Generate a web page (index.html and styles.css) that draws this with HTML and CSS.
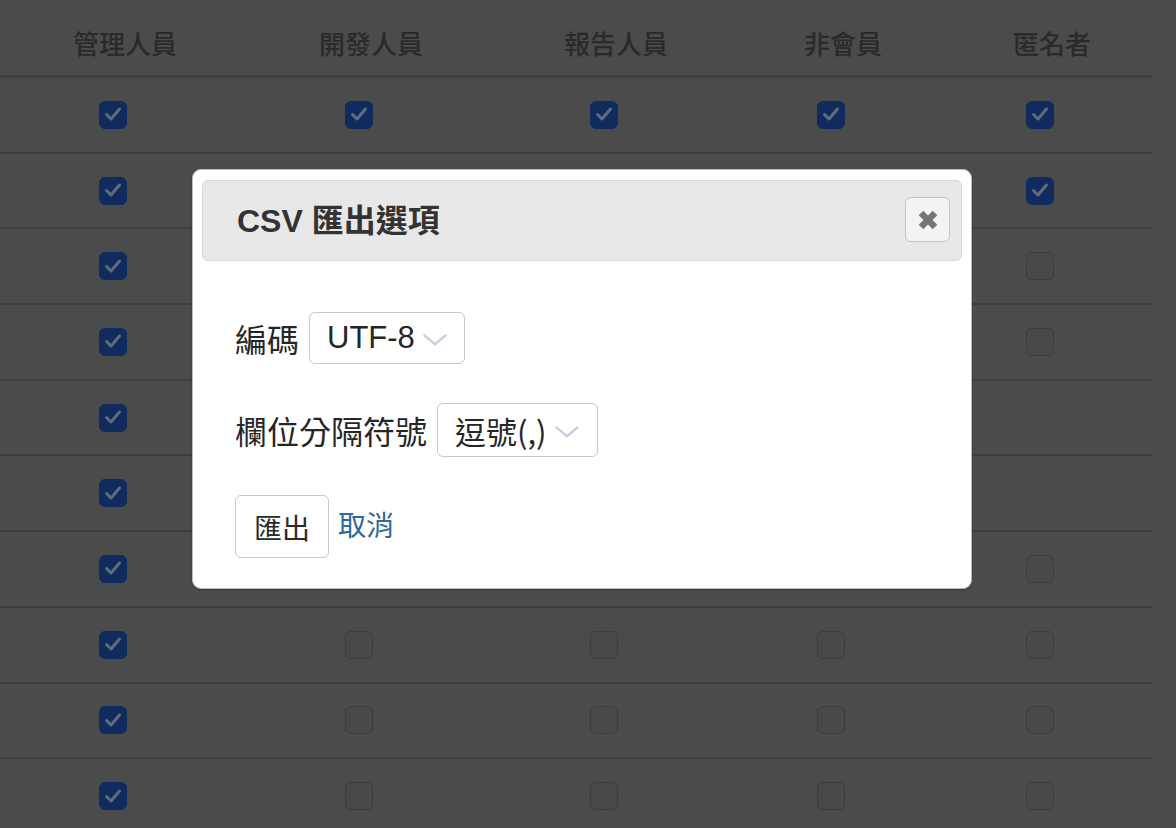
FILE: index.html
```html
<!DOCTYPE html>
<html lang="zh-Hant">
<head>
<meta charset="utf-8">
<title>CSV 匯出選項</title>
<link rel="stylesheet" href="styles.css">
</head>
<body>
<div class="table">
  <div class="row head">
    <div class="th">管理人員</div>
    <div class="th">開發人員</div>
    <div class="th">報告人員</div>
    <div class="th">非會員</div>
    <div class="th">匿名者</div>
  </div>
  <div class="row">
    <div class="td"><span class="cb on"><svg viewBox="0 0 28 28"><path d="M7.5 14.5 L12 19 L20.5 9"/></svg></span></div>
    <div class="td"><span class="cb on"><svg viewBox="0 0 28 28"><path d="M7.5 14.5 L12 19 L20.5 9"/></svg></span></div>
    <div class="td"><span class="cb on"><svg viewBox="0 0 28 28"><path d="M7.5 14.5 L12 19 L20.5 9"/></svg></span></div>
    <div class="td"><span class="cb on"><svg viewBox="0 0 28 28"><path d="M7.5 14.5 L12 19 L20.5 9"/></svg></span></div>
    <div class="td"><span class="cb on"><svg viewBox="0 0 28 28"><path d="M7.5 14.5 L12 19 L20.5 9"/></svg></span></div>
  </div>
  <div class="row">
    <div class="td"><span class="cb on"><svg viewBox="0 0 28 28"><path d="M7.5 14.5 L12 19 L20.5 9"/></svg></span></div>
    <div class="td"><span class="cb"></span></div>
    <div class="td"><span class="cb"></span></div>
    <div class="td"><span class="cb"></span></div>
    <div class="td"><span class="cb on"><svg viewBox="0 0 28 28"><path d="M7.5 14.5 L12 19 L20.5 9"/></svg></span></div>
  </div>
  <div class="row">
    <div class="td"><span class="cb on"><svg viewBox="0 0 28 28"><path d="M7.5 14.5 L12 19 L20.5 9"/></svg></span></div>
    <div class="td"><span class="cb"></span></div>
    <div class="td"><span class="cb"></span></div>
    <div class="td"><span class="cb"></span></div>
    <div class="td"><span class="cb"></span></div>
  </div>
  <div class="row">
    <div class="td"><span class="cb on"><svg viewBox="0 0 28 28"><path d="M7.5 14.5 L12 19 L20.5 9"/></svg></span></div>
    <div class="td"><span class="cb"></span></div>
    <div class="td"><span class="cb"></span></div>
    <div class="td"><span class="cb"></span></div>
    <div class="td"><span class="cb"></span></div>
  </div>
  <div class="row">
    <div class="td"><span class="cb on"><svg viewBox="0 0 28 28"><path d="M7.5 14.5 L12 19 L20.5 9"/></svg></span></div>
    <div class="td"><span class="cb"></span></div>
    <div class="td"><span class="cb"></span></div>
    <div class="td"><span class="cb"></span></div>
    <div class="td"></div>
  </div>
  <div class="row">
    <div class="td"><span class="cb on"><svg viewBox="0 0 28 28"><path d="M7.5 14.5 L12 19 L20.5 9"/></svg></span></div>
    <div class="td"><span class="cb"></span></div>
    <div class="td"><span class="cb"></span></div>
    <div class="td"><span class="cb"></span></div>
    <div class="td"></div>
  </div>
  <div class="row">
    <div class="td"><span class="cb on"><svg viewBox="0 0 28 28"><path d="M7.5 14.5 L12 19 L20.5 9"/></svg></span></div>
    <div class="td"><span class="cb"></span></div>
    <div class="td"><span class="cb"></span></div>
    <div class="td"><span class="cb"></span></div>
    <div class="td"><span class="cb"></span></div>
  </div>
  <div class="row">
    <div class="td"><span class="cb on"><svg viewBox="0 0 28 28"><path d="M7.5 14.5 L12 19 L20.5 9"/></svg></span></div>
    <div class="td"><span class="cb"></span></div>
    <div class="td"><span class="cb"></span></div>
    <div class="td"><span class="cb"></span></div>
    <div class="td"><span class="cb"></span></div>
  </div>
  <div class="row">
    <div class="td"><span class="cb on"><svg viewBox="0 0 28 28"><path d="M7.5 14.5 L12 19 L20.5 9"/></svg></span></div>
    <div class="td"><span class="cb"></span></div>
    <div class="td"><span class="cb"></span></div>
    <div class="td"><span class="cb"></span></div>
    <div class="td"><span class="cb"></span></div>
  </div>
  <div class="row">
    <div class="td"><span class="cb on"><svg viewBox="0 0 28 28"><path d="M7.5 14.5 L12 19 L20.5 9"/></svg></span></div>
    <div class="td"><span class="cb"></span></div>
    <div class="td"><span class="cb"></span></div>
    <div class="td"><span class="cb"></span></div>
    <div class="td"><span class="cb"></span></div>
  </div>
</div>

<div class="modal">
  <div class="modal-head">
    <h2 class="modal-title">CSV 匯出選項</h2>
    <button class="close" type="button" aria-label="關閉">
      <svg viewBox="0 0 24 24"><path d="M5 5 L19 19 M19 5 L5 19"/></svg>
    </button>
  </div>
  <div class="modal-body">
    <div class="field">
      <span class="label">編碼</span>
      <span class="select">UTF-8<svg class="chev" viewBox="0 0 28 16"><path d="M2 3 L14 13 L26 3"/></svg></span>
    </div>
    <div class="field">
      <span class="label">欄位分隔符號</span>
      <span class="select tall"><span class="cjk">逗號(,)</span><svg class="chev" viewBox="0 0 28 16"><path d="M2 3 L14 13 L26 3"/></svg></span>
    </div>
    <div class="actions">
      <button class="btn" type="button">匯出</button>
      <a class="link" href="#">取消</a>
    </div>
  </div>
</div>
</body>
</html>
```

FILE: styles.css
```css
html, body {
  margin: 0;
  padding: 0;
}
body {
  width: 1176px;
  height: 828px;
  overflow: hidden;
  background: #4b4b4b;
  font-family: "Noto Sans CJK TC", sans-serif;
  position: relative;
}

.table {
  width: 1153px;
}
.row {
  display: grid;
  grid-template-columns: 226px 266px 224px 230px 188px;
  height: 73.7px;
  border-bottom: 2px solid #3e3e3e;
  box-sizing: content-box;
}
.row.head {
  height: 75px;
  border-bottom: 3px solid #404040;
}
.th {
  padding-left: 24px;
  padding-top: 24px;
  text-align: center;
  font-size: 26px;
  font-weight: 500;
  line-height: 38px;
  color: #2a2a2a;
}
.td {
  display: flex;
  align-items: center;
  justify-content: center;
}
.cb {
  width: 28px;
  height: 28px;
  box-sizing: border-box;
  border-radius: 6px;
  border: 1.5px solid #3c3c3c;
  background: #494949;
  display: block;
}
.cb.on {
  background: #102b5e;
  border-color: #102b5e;
}
.cb svg {
  display: block;
  margin: -1.5px;
  width: 28px;
  height: 28px;
}
.cb svg path {
  fill: none;
  stroke: #626a7c;
  stroke-width: 3;
  stroke-linecap: round;
  stroke-linejoin: round;
}

.modal {
  position: absolute;
  left: 192px;
  top: 169px;
  width: 780px;
  box-sizing: border-box;
  background: #fff;
  border: 1px solid #bcbcbc;
  border-radius: 9px;
  box-shadow: 0 1px 2px rgba(0, 0, 0, 0.25);
  padding: 10px 9px 30px;
}
.modal-head {
  height: 81px;
  box-sizing: border-box;
  background: #e8e8e8;
  border: 1px solid #d8d8d8;
  border-radius: 6px;
  display: flex;
  align-items: center;
  justify-content: space-between;
  padding: 0 11px 0 34px;
}
.modal-title {
  margin: 0;
  font-family: "Liberation Sans", "Noto Sans CJK TC", sans-serif;
  font-weight: bold;
  font-size: 32px;
  color: #333;
  line-height: 40px;
}
.close {
  width: 45px;
  height: 45px;
  box-sizing: border-box;
  border: 1.5px solid #c4c4c4;
  border-radius: 6px;
  background: #f3f3f3;
  padding: 0;
  display: flex;
  align-items: center;
  justify-content: center;
  margin-top: -2px;
}
.close svg {
  width: 24px;
  height: 24px;
}
.close svg path {
  stroke: #767676;
  stroke-width: 6.5;
  fill: none;
}

.modal-body {
  padding: 51px 0 0 33px;
  display: flex;
  flex-direction: column;
  gap: 39px;
}
.field {
  display: flex;
  align-items: center;
  gap: 10px;
}
.label {
  font-size: 32px;
  color: #262626;
  line-height: 40px;
}
.select {
  height: 52px;
  box-sizing: border-box;
  border: 1.5px solid #c9c9c9;
  border-radius: 6px;
  display: inline-flex;
  align-items: center;
  padding: 0 15px 0 17px;
  font-family: "Liberation Sans", "Noto Sans CJK TC", sans-serif;
  font-size: 31px;
  color: #262626;
}
.select.tall {
  height: 54px;
  padding-right: 16px;
}
.cjk {
  font-family: "Noto Sans CJK TC", sans-serif;
  font-size: 31px;
}
.chev {
  width: 28px;
  height: 15px;
  margin-left: 6px;
  margin-top: 2px;
}
.chev path {
  fill: none;
  stroke: #cbcbdc;
  stroke-width: 2.4;
}

.actions {
  display: flex;
  align-items: center;
  gap: 9px;
  margin-top: -1px;
}
.btn {
  width: 94px;
  height: 63px;
  box-sizing: border-box;
  border: 1.5px solid #c9c9c9;
  border-radius: 6px;
  background: #fff;
  font-family: "Noto Sans CJK TC", sans-serif;
  font-size: 28px;
  color: #2a2a2a;
  padding: 0;
}
.link {
  font-size: 28px;
  color: #2e69a0;
  text-decoration: none;
  line-height: 40px;
  margin-top: -5px;
}
```
